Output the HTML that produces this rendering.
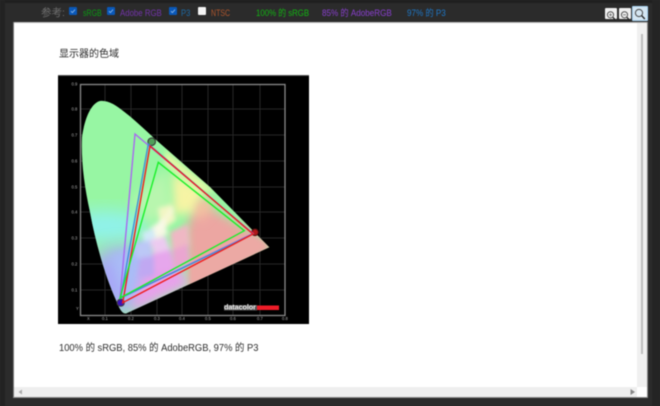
<!DOCTYPE html>
<html><head><meta charset="utf-8">
<style>
html,body{margin:0;padding:0;width:660px;height:406px;overflow:hidden;background:#2b2b2b}
#w{position:absolute;left:0;top:0;width:660px;height:406px;overflow:hidden;background:#2b2b2b;font-family:"Liberation Sans","Noto Sans CJK SC",sans-serif;filter:blur(.4px)}
.a{position:absolute;white-space:nowrap}
.t{font-size:9px;line-height:12px;top:6.500px;transform-origin:left center}
.c{position:absolute;top:7px;width:8px;height:8px;background:#0a58b8;border-radius:1px}
.c svg{position:absolute;left:0;top:0}
.b{position:absolute;top:8px;width:12px;height:11px;background:#f0f0f0;border-radius:1px}
</style></head><body><div id="w">
<div class="a" style="left:0;top:0;width:660px;height:3px;background:#1f1f1f"></div>
<div class="a" style="left:0;top:0;width:5px;height:406px;background:#222"></div>
<div class="a" style="left:652px;top:0;width:8px;height:406px;background:#242424"></div>

<span class="a t" style="left:41px;font-size:10.500px;color:#6f6f6f">参考:</span>
<span class="c" style="left:69px"><svg width="8" height="8"><path d="M2 4.2L3.4 5.6L6 2.6" fill="none" stroke="#9cc4f0" stroke-width=".8"/></svg></span>
<span class="a t" style="left:83px;color:#0a9a12;transform:scaleX(.78)">sRGB</span>
<span class="c" style="left:107px"><svg width="8" height="8"><path d="M2 4.2L3.4 5.6L6 2.6" fill="none" stroke="#9cc4f0" stroke-width=".8"/></svg></span>
<span class="a t" style="left:120px;color:#7434ac;transform:scaleX(.87)">Adobe RGB</span>
<span class="c" style="left:168.500px"><svg width="8" height="8"><path d="M2 4.2L3.4 5.6L6 2.6" fill="none" stroke="#9cc4f0" stroke-width=".8"/></svg></span>
<span class="a t" style="left:181px;color:#1c6aa6;transform:scaleX(.85)">P3</span>
<span class="c" style="left:198px;background:#f4f4f4"></span>
<span class="a t" style="left:211px;color:#b0562c;transform:scaleX(.78)">NTSC</span>
<span class="a t" style="left:256px;color:#12b512;transform:scaleX(.87)">100% 的 sRGB</span>
<span class="a t" style="left:322px;color:#8a3fd0;transform:scaleX(.9)">85% 的 AdobeRGB</span>
<span class="a t" style="left:407px;color:#1e78c8;transform:scaleX(.9)">97% 的 P3</span>

<div class="b" style="left:604.500px"><svg width="12" height="11"><circle cx="5.500" cy="4.800" r="3.100" fill="none" stroke="#444" stroke-width=".9"/><path d="M7.800 7.200L10.500 10" stroke="#222" stroke-width="1.200"/><path d="M4 4.800H7M5.500 3.300V6.300" stroke="#555" stroke-width=".7"/></svg></div>
<div class="b" style="left:618.500px"><svg width="12" height="11"><circle cx="5.500" cy="4.800" r="3.100" fill="none" stroke="#444" stroke-width=".9"/><path d="M7.800 7.200L10.500 10" stroke="#222" stroke-width="1.200"/><path d="M4 4.800H7" stroke="#555" stroke-width=".7"/></svg></div>
<div class="b" style="left:632px;top:6px;width:14px;height:13px;border:1px solid #a9d4f2;background:#d4e6f2"><svg width="14" height="13"><circle cx="6" cy="6" r="3.600" fill="none" stroke="#444" stroke-width="1"/><path d="M8.600 8.600L11.800 12" stroke="#222" stroke-width="1.300"/></svg></div>

<div class="a" style="left:13px;top:22px;width:634px;height:375px;background:#fff;border-top:1px solid #bbb;box-sizing:border-box"></div>
<div class="a" style="left:13px;top:22px;width:1px;height:375px;background:#777"></div>
<div class="a" style="left:13px;top:397px;width:635px;height:1px;background:#888"></div>
<div class="a" style="left:647px;top:22px;width:1px;height:376px;background:#888"></div>
<div class="a" style="left:637px;top:23px;width:10px;height:364px;background:#f0f0f0"></div>
<div class="a" style="left:641px;top:34px;width:2px;height:320px;background:#bdbdbd"></div>
<div class="a" style="left:14px;top:387px;width:623px;height:10px;background:#eee"></div>
<svg class="a" style="left:17px;top:388px" width="8" height="8"><path d="M5 1.500V6.500L1.500 4Z" fill="#aaa"/></svg>
<svg class="a" style="left:629px;top:388px" width="8" height="8"><path d="M1.500 1V7L6 4Z" fill="#888"/></svg>

<span class="a" style="left:59px;top:47.500px;font-size:10px;line-height:14px;color:#2a2a2a">显示器的色域</span>

<svg class="a" style="left:58px;top:75px" width="251" height="249" viewBox="58 75 251 249">
<defs>
<clipPath id="k"><path d="M100 101C92 103 85 116 82 137C81 160 84 185 90 212C96 245 106 278 116 300C119 308 122 314 126 313.500L269.300 247.300L210 187L155 139C140 125 125 111 113 104C108 101.500 104 100.500 100 101Z"/></clipPath>
<filter id="f" x="-40%" y="-40%" width="180%" height="180%"><feGaussianBlur stdDeviation="9"/></filter>
<filter id="g" x="-50%" y="-50%" width="200%" height="200%"><feGaussianBlur stdDeviation="5"/></filter>
<filter id="h" x="-50%" y="-50%" width="200%" height="200%"><feGaussianBlur stdDeviation="2.400"/></filter>
</defs>
<rect x="58" y="75" width="251" height="249" fill="#000"/>
<rect x="58" y="75" width="251" height="1" fill="#555"/>
<g stroke="#262626" stroke-width="1">
<path d="M105 84V316M131 84V316M157 84V316M182 84V316M208 84V316M233 84V316M260 84V316"/>
<path d="M80 109H285M80 135H285M80 161H285M80 187H285M80 212H285M80 238H285M80 264H285M80 290H285"/>
</g>
<rect x="80.500" y="84.500" width="204.500" height="231" fill="none" stroke="#8a8a8a" stroke-width="1.300"/>
<g font-family="Liberation Sans,sans-serif" font-size="4.200" fill="#b0b0b0">
<text x="71.500" y="85.500">0.9</text><text x="71.500" y="110.500">0.8</text><text x="71.500" y="136.500">0.7</text><text x="71.500" y="162.500">0.6</text><text x="71.500" y="188.500">0.5</text><text x="71.500" y="213.500">0.4</text><text x="71.500" y="239.500">0.3</text><text x="71.500" y="265.500">0.2</text><text x="71.500" y="291.500">0.1</text><text x="76" y="310">Y</text>
<text x="87" y="320">X</text><text x="102" y="320">0.1</text><text x="128" y="320">0.2</text><text x="154" y="320">0.3</text><text x="179" y="320">0.4</text><text x="205" y="320">0.5</text><text x="230" y="320">0.6</text><text x="257" y="320">0.7</text><text x="282" y="320">0.8</text>
</g>
<g clip-path="url(#k)">
<rect x="58" y="75" width="251" height="249" fill="#97f6a3"/>
<ellipse cx="105" cy="226" rx="42" ry="15" fill="#8ff2ee" filter="url(#f)"/>
<ellipse cx="118" cy="280" rx="32" ry="32" fill="#a8a8f6" filter="url(#f)"/>
<path d="M110 255L150 240L150 280L125 305Z" fill="#a9bcf6" filter="url(#g)"/>
<path d="M196 200L275 245L190 295L186 232Z" fill="#eca6a2" filter="url(#g)"/>
<path d="M130 312L190 285L170 250L145 265Z" fill="#e7a2ea" filter="url(#g)"/>
<path d="M190 287L269 247L250 235L190 262Z" fill="#eca9a4" filter="url(#h)"/>
<path d="M172 215L172 172L205 190L198 212Z" fill="#f6f4a4" filter="url(#g)"/>
<path d="M165 150L215 192L200 190L165 165Z" fill="#def8a4" filter="url(#h)"/>
<path d="M205 197L215 205L200 222L195 205Z" fill="#f4c0a0" filter="url(#g)"/>
<path d="M132 200L165 170L172 205L150 225Z" fill="#b8f6ae" filter="url(#g)"/>
<!-- mosaic cells -->
<g filter="url(#h)">
<path d="M158 208L172 204L176 220L160 232Z" fill="#f2f6c4"/>
<path d="M150 228L164 218L168 234L154 240Z" fill="#f6f8e4"/>
<path d="M142 232L154 228L156 244L144 246Z" fill="#d0eaf7"/>
<path d="M134 244L150 240L152 258L136 258Z" fill="#bcc8f6"/>
<path d="M150 240L166 236L170 250L154 256Z" fill="#eccaf0"/>
<path d="M152 254L170 250L172 268L156 272Z" fill="#e6a6ec"/>
<path d="M170 232L188 224L190 246L172 250Z" fill="#efb8c4"/>
<path d="M172 250L188 244L190 262L174 270Z" fill="#eaa6d0"/>
<path d="M140 258L154 256L154 276L138 278Z" fill="#c0a8f2"/>
</g>
<path d="M156 233L173 208" stroke="#fffdf0" stroke-width="3" opacity=".6" filter="url(#h)"/>
</g>
<circle cx="151.700" cy="141.700" r="3.800" fill="#4f9f58" stroke="#333" stroke-width="1"/>
<circle cx="255" cy="232.300" r="3.300" fill="#b01818" stroke="#551010" stroke-width="1"/>
<circle cx="120.700" cy="302.700" r="3.600" fill="#3a12b8" stroke="#444" stroke-width="1"/>
<g fill="none" stroke-width="1.400" stroke-linejoin="miter">
<path d="M135 134L253 233.500L120 298Z" stroke="#a868f0"/>
<path d="M148.300 144L253 234L120.700 298Z" stroke="#3f8fd8"/>
<path d="M150 146L253 234L122.700 302.700Z" stroke="#f01c1c"/>
<path d="M158.300 162.300L244.300 230.700L120 298Z" stroke="#18f028"/>
</g>
<rect x="224" y="305" width="33" height="5.500" fill="#555"/>
<text x="224" y="309.300" font-family="Liberation Sans,sans-serif" font-size="7.300" font-weight="bold" fill="#eee" textLength="32">datacolor</text>
<rect x="257" y="305.500" width="22" height="4.500" fill="#ee1c28"/>
</svg>

<span class="a" style="left:59px;top:341.500px;font-size:10.300px;line-height:14px;color:#2e2e2e;transform:scaleX(.91);transform-origin:left center">100% 的 sRGB, 85% 的 AdobeRGB, 97% 的 P3</span>
</div></body></html>
